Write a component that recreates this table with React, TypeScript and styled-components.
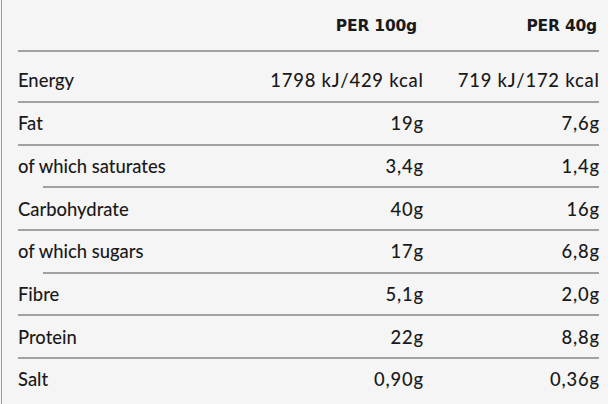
import React, { ReactElement } from 'react'
import styled, { createGlobalStyle } from 'styled-components'

const GlobalStyle = createGlobalStyle`
  html, body {
    margin: 0;
    padding: 0;
    background-color: #f5f5f5;
  }
`

const Page = styled.div`
  width: 608px;
  height: 404px;
  box-sizing: border-box;
  padding: 0 9px 0 1px;
  background-color: #f5f5f5;
  font-family: Lato, 'Open Sans', sans-serif;
  color: #1a1a1a;
  overflow: hidden;
`

const Frame = styled.div`
  height: 100%;
  border-left: 1px solid #9c9c9c;
  padding-left: 16px;
`

const Row = styled.div<{ $indentLine?: boolean; $header?: boolean; $first?: boolean }>`
  display: grid;
  grid-template-columns: 1fr 180px 176px;
  align-items: center;
  height: ${p => (p.$header ? 51 : p.$first ? 45 : 42.7)}px;
  padding-top: ${p => (p.$first ? 6 : 0)}px;
  box-sizing: content-box;
  font-size: 18.4px;
  font-weight: 500;
  position: relative;
  &::after {
    content: '';
    position: absolute;
    left: ${p => (p.$indentLine ? 25 : 0)}px;
    right: 0;
    bottom: -1px;
    height: 2px;
    background-color: #a2a2a2;
  }
  &:last-child::after {
    display: none;
  }
`

const Label = styled.div`
  letter-spacing: 0;
`

const Value = styled.div`
  text-align: right;
  letter-spacing: 0.8px;
  margin-right: -0.8px;
`

const HeadCell = styled.div<{ $pad?: number }>`
  text-align: right;
  font-family: 'DejaVu Sans', sans-serif;
  font-weight: 700;
  font-size: 15.5px;
  letter-spacing: -0.2px;
  padding-right: ${p => p.$pad ?? 0}px;
`

type Nutrient = {
  name: string
  per100: string
  perPortion: string
  sub?: boolean
}

const nutrients: Nutrient[] = [
  { name: 'Energy', per100: '1798 kJ/429 kcal', perPortion: '719 kJ/172 kcal' },
  { name: 'Fat', per100: '19g', perPortion: '7,6g' },
  { name: 'of which saturates', per100: '3,4g', perPortion: '1,4g', sub: true },
  { name: 'Carbohydrate', per100: '40g', perPortion: '16g' },
  { name: 'of which sugars', per100: '17g', perPortion: '6,8g', sub: true },
  { name: 'Fibre', per100: '5,1g', perPortion: '2,0g' },
  { name: 'Protein', per100: '22g', perPortion: '8,8g' },
  { name: 'Salt', per100: '0,90g', perPortion: '0,36g' },
]

const App = (): ReactElement => {
  return (
    <>
      <GlobalStyle />
      <Page>
        <Frame>
          <Row $header>
            <div />
            <HeadCell $pad={6}>PER 100g</HeadCell>
            <HeadCell $pad={2}>PER 40g</HeadCell>
          </Row>
          {nutrients.map((n, i) => (
            <Row key={n.name} $indentLine={n.sub} $first={i === 0}>
              <Label>{n.name}</Label>
              <Value>{n.per100}</Value>
              <Value>{n.perPortion}</Value>
            </Row>
          ))}
        </Frame>
      </Page>
    </>
  )
}

export default App
